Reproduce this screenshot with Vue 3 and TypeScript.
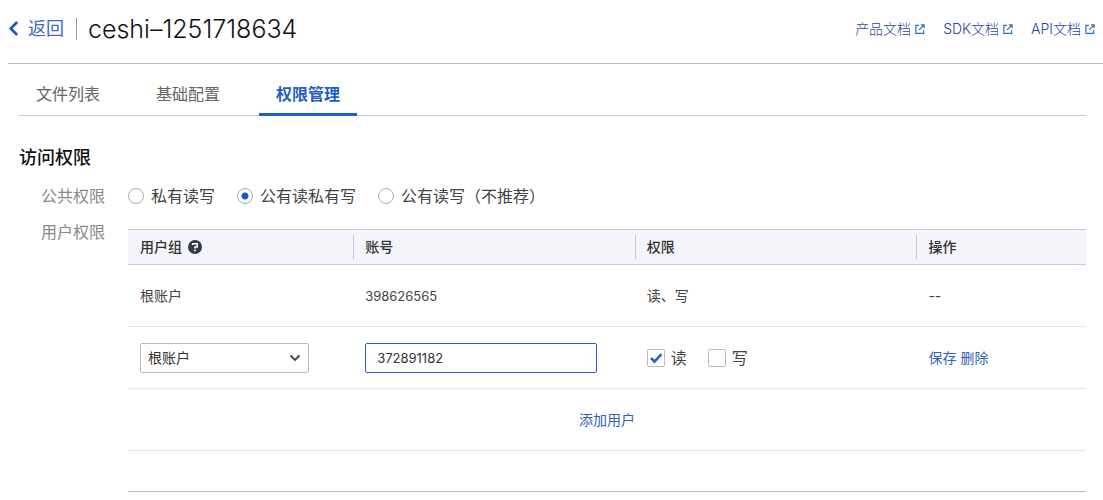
<script setup lang="ts">
import { ref } from 'vue'

interface Choice {
  value: string
  label: string
}

const docs: string[] = ['产品文档', 'SDK文档', 'API文档']
const tabs: string[] = ['文件列表', '基础配置', '权限管理']
const activeTab = ref('权限管理')

const accessChoices: Choice[] = [
  { value: 'private', label: '私有读写' },
  { value: 'public-read', label: '公有读私有写' },
  { value: 'public-write', label: '公有读写（不推荐）' },
]
const access = ref('public-read')

const group = ref('root')
const account = ref('372891182')
const canRead = ref(true)
const canWrite = ref(false)
</script>

<template>
  <div class="page">
    <header class="topbar">
      <a class="back" href="#">
        <svg class="back-icon" viewBox="0 0 12 18" aria-hidden="true">
          <path d="M10 2 3 9l7 7" fill="none" stroke="currentColor" stroke-width="3" />
        </svg>
        <span>返回</span>
      </a>
      <span class="divider"></span>
      <h1>ceshi–1251718634</h1>
      <nav class="docs">
        <a v-for="doc in docs" :key="doc" href="#">
          {{ doc }}
          <svg class="ext" viewBox="0 0 11 11" aria-hidden="true">
            <path
              d="M4.5 1.5H1v8.8h8.5V7M6.5 1H10v3.5M9.8 1.2 4.5 6.5"
              fill="none"
              stroke="currentColor"
              stroke-width="1.3"
            />
          </svg>
        </a>
      </nav>
    </header>

    <main>
      <div class="tabs" role="tablist">
        <button
          v-for="tab in tabs"
          :key="tab"
          type="button"
          role="tab"
          class="tab"
          :class="{ active: tab === activeTab }"
          :aria-selected="tab === activeTab"
          @click="activeTab = tab"
        >
          {{ tab }}
        </button>
      </div>

      <h2>访问权限</h2>

      <div class="field">
        <span id="access-label" class="field-label">公共权限</span>
        <div class="choices" role="radiogroup" aria-labelledby="access-label">
          <label v-for="choice in accessChoices" :key="choice.value" class="choice">
            <input v-model="access" type="radio" name="access" :value="choice.value" />
            {{ choice.label }}
          </label>
        </div>
      </div>

      <div class="field users">
        <span class="field-label">用户权限</span>
        <table>
          <colgroup>
            <col class="col-group" />
            <col class="col-account" />
            <col class="col-rights" />
            <col />
          </colgroup>
          <thead>
            <tr>
              <th>
                <div class="head">
                  用户组
                  <svg class="help" viewBox="0 0 14 14" aria-hidden="true">
                    <circle cx="7" cy="7" r="7" fill="#333a48" />
                    <path
                      d="M4.6 5V3.8h4.6v3.1H7v1.6"
                      fill="none"
                      stroke="#fff"
                      stroke-width="1.5"
                    />
                    <path d="M6.2 9.6h1.6v1.6H6.2z" fill="#fff" />
                  </svg>
                </div>
              </th>
              <th><div class="head">账号</div></th>
              <th><div class="head">权限</div></th>
              <th><div class="head">操作</div></th>
            </tr>
          </thead>
          <tbody>
            <tr>
              <td>根账户</td>
              <td class="number">398626565</td>
              <td>读、写</td>
              <td>--</td>
            </tr>
            <tr>
              <td>
                <div class="select">
                  <select v-model="group" aria-label="用户组">
                    <option value="root">根账户</option>
                  </select>
                  <svg class="chevron" viewBox="0 0 12 8" aria-hidden="true">
                    <path d="M1.5 1.5 6 6l4.5-4.5" fill="none" stroke="#444" stroke-width="1.8" />
                  </svg>
                </div>
              </td>
              <td>
                <input v-model="account" class="account number" type="text" aria-label="账号" />
              </td>
              <td>
                <div class="checks">
                  <label class="check">
                    <span class="box">
                      <input v-model="canRead" type="checkbox" />
                      <svg v-if="canRead" viewBox="0 0 18 18" aria-hidden="true">
                        <path
                          d="m4 9 3.5 3.7 7-7.5"
                          fill="none"
                          stroke="#1a66cc"
                          stroke-width="2.6"
                        />
                      </svg>
                    </span>
                    读
                  </label>
                  <label class="check">
                    <span class="box">
                      <input v-model="canWrite" type="checkbox" />
                      <svg v-if="canWrite" viewBox="0 0 18 18" aria-hidden="true">
                        <path
                          d="m4 9 3.5 3.7 7-7.5"
                          fill="none"
                          stroke="#1a66cc"
                          stroke-width="2.6"
                        />
                      </svg>
                    </span>
                    写
                  </label>
                </div>
              </td>
              <td>
                <div class="actions">
                  <button type="button" class="link">保存</button>
                  <button type="button" class="link">删除</button>
                </div>
              </td>
            </tr>
            <tr>
              <td class="add" colspan="4"><button type="button" class="link">添加用户</button></td>
            </tr>
          </tbody>
          <tfoot>
            <tr>
              <td colspan="4"></td>
            </tr>
          </tfoot>
        </table>
      </div>
    </main>
  </div>
</template>

<style>
body {
  margin: 0;
  background: #fff;
}
</style>

<style scoped>
.page,
.page * {
  box-sizing: border-box;
}

.page {
  font-family: Inter, 'Noto Sans CJK SC', sans-serif;
  font-weight: 400;
  font-size: 14px;
  line-height: 20px;
  color: #444;
}

a {
  color: inherit;
  text-decoration: none;
}

button,
input,
select {
  font: inherit;
  margin: 0;
}

.topbar {
  display: flex;
  align-items: center;
  height: 64px;
  margin-left: 8px;
  padding: 0 8px 6px 0;
  border-bottom: 1px solid #bbb;
}

.back {
  display: flex;
  align-items: center;
  gap: 9px;
  font-size: 18px;
  color: #4468c4;
}

.back-icon {
  width: 11px;
  height: 17px;
  color: #1f5cc4;
}

.divider {
  width: 1px;
  height: 22px;
  margin: 0 11px 0 12px;
  background: #999;
}

h1 {
  margin: 0;
  font-size: 25px;
  line-height: 32px;
  font-weight: 300;
  color: #111;
}

.docs {
  display: flex;
  gap: 18px;
  margin-left: auto;
  font-weight: 300;
  color: #2a4699;
}

.docs a {
  display: flex;
  align-items: center;
  gap: 4px;
}

.ext {
  width: 10px;
  height: 10px;
  color: #2274b8;
}

main {
  padding: 8px 17px 0 19px;
}

.tabs {
  display: flex;
  gap: 22px;
  height: 44px;
  border-bottom: 1px solid #ccc;
}

.tab {
  height: 44px;
  padding: 2px 17px 0;
  border: 0;
  border-bottom: 3px solid transparent;
  background: none;
  font-size: 16px;
  color: #666;
}

.tab.active {
  border-bottom-color: #1f5fc4;
  font-weight: 700;
  color: #1f5fc4;
}

h2 {
  margin: 30px 0 0;
  font-size: 18px;
  line-height: 24px;
  font-weight: 500;
  color: #111;
}

.field {
  display: flex;
  align-items: center;
  gap: 23px;
  margin-top: 14px;
  padding-left: 22px;
}

.field-label {
  flex: none;
  font-size: 16px;
  line-height: 24px;
  color: #888;
}

.users {
  align-items: flex-start;
  margin-top: 12px;
}

.choices {
  display: flex;
  gap: 22px;
}

.choice {
  display: flex;
  align-items: center;
  gap: 7px;
  font-size: 16px;
  line-height: 24px;
}

.choice input {
  appearance: none;
  width: 16px;
  height: 16px;
  border: 1px solid #aaa;
  border-radius: 50%;
  background: #fff;
}

.choice input:checked {
  background: radial-gradient(circle, #1a56d0 3px, #fff 4px);
}

table {
  flex: 1;
  margin-top: 9px;
  table-layout: fixed;
  border-collapse: separate;
  border-spacing: 0;
}

.col-group {
  width: 23.5%;
}

.col-account,
.col-rights {
  width: 29.4%;
}

th {
  height: 36px;
  padding: 0;
  border-top: 1px solid #ccc;
  border-bottom: 1px solid #ccc;
  background: #f3f5fa;
  text-align: left;
  font-weight: 500;
  color: #333;
}

.head {
  display: flex;
  align-items: center;
  gap: 6px;
  height: 24px;
  padding-left: 11px;
  border-left: 1px solid #c8c8cc;
}

th:first-child .head {
  border-left-color: transparent;
}

.help {
  width: 14px;
  height: 14px;
}

td {
  height: 62px;
  padding: 0 12px;
  border-bottom: 1px solid #e4e4e4;
}

.number {
  font-size: 13px;
}

tfoot td {
  height: 41px;
  border-bottom-color: #bbb;
}

.select {
  display: grid;
  align-items: center;
  width: 84%;
}

.select > * {
  grid-area: 1 / 1;
}

select {
  appearance: none;
  width: 100%;
  height: 30px;
  padding: 0 7px;
  border: 1px solid #bbb;
  border-radius: 2px;
  background: #fff;
  color: #333;
}

.chevron {
  justify-self: end;
  width: 12px;
  height: 8px;
  margin-right: 8px;
  pointer-events: none;
}

.account {
  display: block;
  width: 90%;
  height: 30px;
  padding: 0 11px;
  border: 1px solid #2a62b8;
  border-radius: 2px;
  outline: 0;
  background: #fff;
  color: #333;
}

.checks,
.check {
  display: flex;
  align-items: center;
}

.checks {
  gap: 21px;
}

.check {
  gap: 6px;
  font-size: 16px;
}

.box {
  display: grid;
  width: 18px;
  height: 18px;
}

.box > * {
  grid-area: 1 / 1;
  width: 18px;
  height: 18px;
}

.box input {
  appearance: none;
  border: 1px solid #bbb;
  border-radius: 2px;
  background: #fff;
}

.box svg {
  pointer-events: none;
}

.actions {
  display: flex;
  gap: 4px;
}

.link {
  padding: 0;
  border: 0;
  background: none;
  color: #2f62b4;
}

.add {
  text-align: center;
}
</style>
